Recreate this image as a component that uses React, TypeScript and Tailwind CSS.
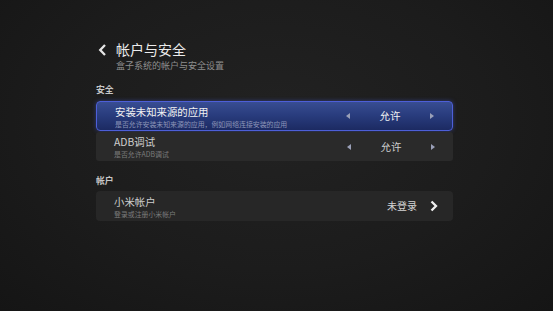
import React from 'react'

function TriLeft() {
  return (
    <svg width="4" height="6" viewBox="0 0 4 6" className="block">
      <path d="M4 0 L0 3 L4 6 Z" fill="#9aa0b8" />
    </svg>
  )
}

function TriRight() {
  return (
    <svg width="4" height="6" viewBox="0 0 4 6" className="block">
      <path d="M0 0 L4 3 L0 6 Z" fill="#9aa0b8" />
    </svg>
  )
}

interface RowProps {
  title: string
  desc: string
  focused?: boolean
  right: React.ReactNode
  className?: string
}

function Row({ title, desc, focused, right, className = '' }: RowProps) {
  return (
    <div
      className={
        'flex items-center justify-between pl-[18px] ' +
        (focused
          ? 'h-[30px] rounded-[4px] border-[1.5px] border-[#4d5fd8] bg-[linear-gradient(180deg,#384d92_0%,#283b7c_50%,#1c2a62_100%)] shadow-[0_0_4px_rgba(70,90,210,0.5)] '
          : '') +
        className
      }
    >
      <div className="flex flex-col">
        <span
          className={
            'text-[10.4px] leading-[15px] ' +
            (focused ? 'text-[#f2f2f2]' : 'text-[#cfcfcf]')
          }
        >
          {title}
        </span>
        <span
          className={
            'text-[6.9px] leading-[10px] ' +
            (focused ? 'text-[#8d95b8]' : 'text-[#7c7c7c]')
          }
        >
          {desc}
        </span>
      </div>
      {right}
    </div>
  )
}

function Toggle({ value, focused }: { value: string; focused?: boolean }) {
  return (
    <div className="flex items-center w-[88px] justify-between mr-[18px]">
      <TriLeft />
      <span
        className={
          'text-[10.5px] leading-[14px] ' + (focused ? 'text-[#f4f4f4]' : 'text-[#cfcfcf]')
        }
      >
        {value}
      </span>
      <TriRight />
    </div>
  )
}

export default function App() {
  return (
    <div className="w-[553px] h-[311px] overflow-hidden bg-[radial-gradient(ellipse_at_50%_40%,#222222_0%,#1c1c1c_55%,#151515_100%)] font-['Noto_Sans_CJK_SC','Noto_Sans',sans-serif]">
      <div className="pt-[40px] pl-[96px] w-[453px]">
        {/* Header */}
        <div className="flex">
          <div className="w-[20px] pt-[4px] pl-[2px]">
            <svg width="9" height="12" viewBox="0 0 9 12">
              <path d="M7 1 L2.2 6 L7 11" fill="none" stroke="#e6e6e6" strokeWidth="2.3" />
            </svg>
          </div>
          <div className="flex flex-col">
            <span className="text-[14px] leading-[19px] text-[#ececec]">帐户与安全</span>
            <span className="text-[9px] leading-[13px] text-[#8e8e8e]">盒子系统的帐户与安全设置</span>
          </div>
        </div>

        {/* Security */}
        <div className="mt-[12px] text-[8.8px] leading-[12px] font-bold text-[#c6c6c6]">安全</div>
        <div className="mt-[5px] flex flex-col">
          <Row
            focused
            title="安装未知来源的应用"
            desc="是否允许安装未知来源的应用，例如网络连接安装的应用"
            right={<Toggle value="允许" focused />}
          />
          <Row
            title="ADB调试"
            desc="是否允许ADB调试"
            right={<Toggle value="允许" />}
            className="h-[29px] mt-[1px] rounded-[3px] bg-[#2a2a2a]"
          />
        </div>

        {/* Account */}
        <div className="mt-[14px] text-[8.8px] leading-[12px] font-bold text-[#c6c6c6]">帐户</div>
        <Row
          title="小米帐户"
          desc="登录或注册小米帐户"
          className="h-[30px] mt-[4px] rounded-[4px] bg-[#272727]"
          right={
            <div className="flex items-center gap-[13px] mr-[15px]">
              <span className="text-[10px] leading-[14px] text-[#d4d4d4]">未登录</span>
              <svg width="8" height="12" viewBox="0 0 8 12">
                <path d="M1.5 1.5 L6 6 L1.5 10.5" fill="none" stroke="#f0f0f0" strokeWidth="2.3" />
              </svg>
            </div>
          }
        />
      </div>
    </div>
  )
}
